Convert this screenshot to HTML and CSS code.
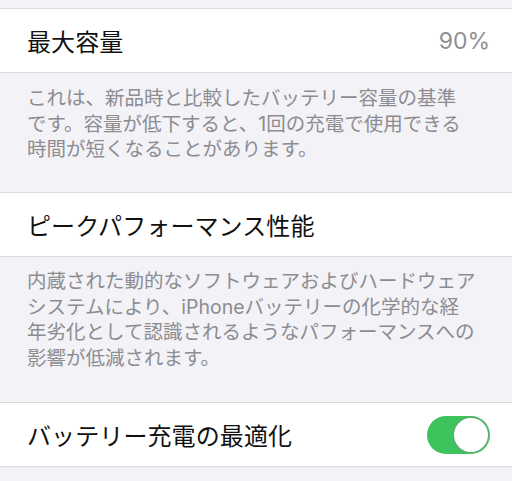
FILE: index.html
```html
<!DOCTYPE html>
<html lang="ja">
<head>
<meta charset="utf-8">
<link rel="stylesheet" href="styles.css">
</head>
<body>
<div class="top"></div>
<div class="row">
  <span class="title">最大容量</span>
  <span class="value">90%</span>
</div>
<div class="note note1">これは、新品時と比較したバッテリー容量の基準<br>です。容量が低下すると、1回の充電で使用できる<br>時間が短くなることがあります。</div>
<div class="row">
  <span class="title">ピークパフォーマンス性能</span>
</div>
<div class="note note2">内蔵された動的なソフトウェアおよびハードウェア<br>システムにより、iPhoneバッテリーの化学的な経<br>年劣化として認識されるようなパフォーマンスへの<br>影響が低減されます。</div>
<div class="row">
  <span class="title">バッテリー充電の最適化</span>
  <span class="toggle"><span class="knob"></span></span>
</div>
</body>
</html>
```
FILE: styles.css
```css
html, body {
  margin: 0;
  padding: 0;
  background: #f2f2f7;
  font-family: "Inter", "Noto Sans CJK JP", sans-serif;
  width: 512px;
  height: 481px;
  overflow: hidden;
}
.top {
  height: 8px;
}
.row {
  box-sizing: border-box;
  height: 65px;
  background: #fff;
  border-top: 1px solid #dadade;
  border-bottom: 1px solid #dadade;
  display: flex;
  align-items: center;
  justify-content: space-between;
  padding: 0 22px 0 27px;
}
.title {
  font-size: 24px;
  color: #111;
  letter-spacing: 0.1px;
}
.value {
  font-size: 23px;
  color: #8e8e93;
}
.note {
  box-sizing: border-box;
  padding: 0 0 0 27px;
  font-size: 19.5px;
  line-height: 25.5px;
  color: #8c8c91;
  white-space: nowrap;
}
.note1 {
  height: 119px;
  padding-top: 13px;
}
.note2 {
  height: 145px;
  padding-top: 12px;
}
.toggle {
  width: 63px;
  height: 38px;
  border-radius: 19px;
  background: #3cc35c;
  display: flex;
  align-items: center;
  justify-content: flex-end;
  padding: 0 2px;
  box-sizing: border-box;
}
.knob {
  width: 34px;
  height: 34px;
  border-radius: 50%;
  background: #fff;
  box-shadow: 0 0 0 1px #6fa57c;
}
```
